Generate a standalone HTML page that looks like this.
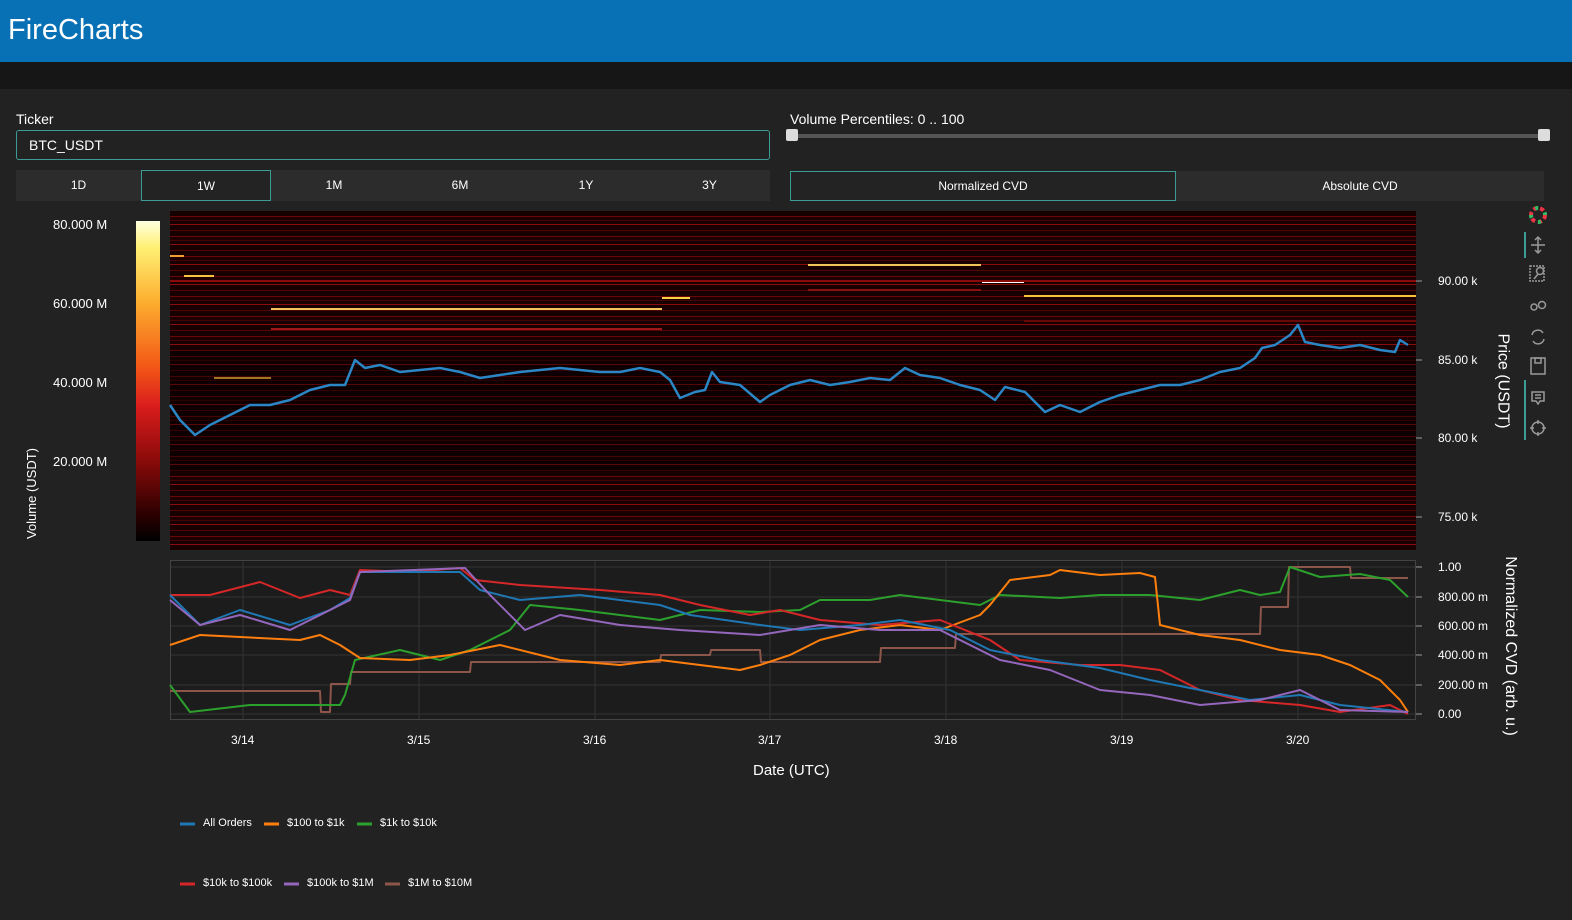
<!DOCTYPE html>
<html><head><meta charset="utf-8"><style>
*{margin:0;padding:0;box-sizing:border-box}
body{width:1572px;height:920px;background:#222;font-family:"Liberation Sans",sans-serif;color:#fff;position:relative;overflow:hidden}
.hdr{position:absolute;left:0;top:0;width:1572px;height:62px;background:#0870b4}
.hdr span{position:absolute;left:8px;top:14px;font-size:29px}
.bar{position:absolute;left:0;top:62px;width:1572px;height:27px;background:#161616}
.t{position:absolute;font-size:14px;white-space:nowrap}
.s{position:absolute;font-size:12px;white-space:nowrap}
.inp{position:absolute;left:16px;top:130px;width:754px;height:30px;border:1px solid #3a9c94;border-radius:3px;font-size:14px;padding:6px 12px}
.tabs{position:absolute;left:16px;top:170px;width:754px;height:31px;background:#2c2c2c}
.tab{position:absolute;top:0;height:31px;font-size:12px;text-align:center;line-height:31px}
.heat{position:absolute;left:170px;top:211px;width:1246px;height:339px;background:#140000;overflow:hidden}
</style></head><body>
<div class="hdr"><span>FireCharts</span></div>
<div class="bar"></div>
<div class="t" style="left:16px;top:111px">Ticker</div>
<div class="inp">BTC_USDT</div>
<div class="tabs">
<div class="tab" style="left:0;width:125px">1D</div>
<div class="tab" style="left:125px;width:130px;border:1px solid #3a9c94;background:#232323">1W</div>
<div class="tab" style="left:255px;width:126px">1M</div>
<div class="tab" style="left:381px;width:126px">6M</div>
<div class="tab" style="left:507px;width:126px">1Y</div>
<div class="tab" style="left:633px;width:121px">3Y</div>
</div>
<div class="t" style="left:790px;top:111px">Volume Percentiles: 0 .. 100</div>
<div style="position:absolute;left:792px;top:134px;width:752px;height:4px;background:#555;border-radius:2px"></div>
<div style="position:absolute;left:786px;top:129px;width:12px;height:12px;background:#ddd;border-radius:2px"></div>
<div style="position:absolute;left:1538px;top:129px;width:12px;height:12px;background:#ddd;border-radius:2px"></div>
<div style="position:absolute;left:790px;top:171px;width:754px;height:30px;background:#2c2c2c"></div>
<div class="tab" style="left:790px;top:171px;width:386px;height:30px;line-height:28px;border:1px solid #3a9c94;background:#232323">Normalized CVD</div>
<div class="tab" style="left:1176px;top:171px;width:368px;height:30px;line-height:30px">Absolute CVD</div>

<div style="position:absolute;left:136px;top:221px;width:24px;height:320px;background:linear-gradient(#ffffe0,#fff176 8%,#fdb030 25%,#f45a17 45%,#d91c1c 58%,#8a0a0a 75%,#2a0000 92%,#000)"></div>
<div class="s" style="left:53px;top:217px;font-size:13px">80.000 M</div>
<div class="s" style="left:53px;top:296px;font-size:13px">60.000 M</div>
<div class="s" style="left:53px;top:375px;font-size:13px">40.000 M</div>
<div class="s" style="left:53px;top:454px;font-size:13px">20.000 M</div>
<div class="s" style="left:-14px;top:486px;transform:rotate(-90deg);font-size:13px">Volume (USDT)</div>

<div class="heat" style="background:repeating-linear-gradient(#160000 0,#160000 5px,#6a0808 5px,#6a0808 6px,#1e0000 6px,#1e0000 9px,#420404 9px,#420404 10px,#160000 10px,#160000 13px,#8a0c0c 13px,#8a0c0c 14px,#180000 14px,#180000 19px,#520606 19px,#520606 20px)">
<svg width="1246" height="339" style="position:absolute;left:0;top:0">
<g stroke-width="2">
<line x1="0" y1="45" x2="14" y2="45" stroke="#f0a030"/>
<line x1="14" y1="65" x2="44" y2="65" stroke="#f7c441"/>
<line x1="44" y1="167" x2="101" y2="167" stroke="#f5b830"/>
<line x1="101" y1="98" x2="492" y2="98" stroke="#f2c35a"/>
<line x1="101" y1="118" x2="492" y2="118" stroke="#a01818"/>
<line x1="492" y1="87" x2="520" y2="87" stroke="#f7d240"/>
<line x1="638" y1="54" x2="811" y2="54" stroke="#f2c35a"/>
<line x1="638" y1="79" x2="811" y2="79" stroke="#8a1010"/>
<line x1="812" y1="71" x2="854" y2="71" stroke="#ffffff"/>
<line x1="854" y1="85" x2="1246" y2="85" stroke="#f5c23a"/>
<line x1="854" y1="110" x2="1246" y2="110" stroke="#6a0808"/>
<line x1="0" y1="70" x2="1246" y2="70" stroke="#8a0a0a"/>
</g>
<rect x="0" y="140" width="1246" height="120" fill="#000" opacity="0.35"/>
</svg>
</div>
<svg width="1572" height="920" style="position:absolute;left:0;top:0">
<g stroke="#999" stroke-width="1">
<line x1="1416" y1="281" x2="1422" y2="281"/><line x1="1416" y1="360" x2="1422" y2="360"/><line x1="1416" y1="438" x2="1422" y2="438"/><line x1="1416" y1="517" x2="1422" y2="517"/>
</g>
<polyline fill="none" stroke="#2b86c5" stroke-width="2.5" stroke-linejoin="round" points="170,405 180,420 195,435 210,425 230,415 250,405 270,405 290,400 310,390 330,385 345,385 355,360 365,368 380,365 400,372 420,370 440,368 460,372 480,378 500,375 520,372 540,370 560,368 580,370 600,372 620,372 640,368 660,372 670,380 680,398 695,392 705,390 712,372 720,382 740,385 760,402 770,395 790,385 810,380 830,385 850,382 870,378 890,380 905,368 920,375 940,378 960,385 980,390 995,400 1005,387 1025,392 1045,412 1060,405 1080,412 1100,402 1120,395 1140,390 1160,385 1180,385 1200,380 1220,372 1240,368 1255,358 1262,348 1275,345 1290,335 1298,325 1305,342 1320,345 1340,348 1360,345 1380,350 1395,352 1400,340 1408,345"/>
<rect x="170.5" y="560.5" width="1245" height="159" fill="#1c1c1c" stroke="#444"/>
<g stroke="#333" stroke-width="1">
<line x1="243" y1="561" x2="243" y2="719"/><line x1="419" y1="561" x2="419" y2="719"/><line x1="595" y1="561" x2="595" y2="719"/><line x1="770" y1="561" x2="770" y2="719"/><line x1="946" y1="561" x2="946" y2="719"/><line x1="1122" y1="561" x2="1122" y2="719"/><line x1="1298" y1="561" x2="1298" y2="719"/>
<line x1="171" y1="567" x2="1415" y2="567"/><line x1="171" y1="597" x2="1415" y2="597"/><line x1="171" y1="626" x2="1415" y2="626"/><line x1="171" y1="655" x2="1415" y2="655"/><line x1="171" y1="685" x2="1415" y2="685"/><line x1="171" y1="714" x2="1415" y2="714"/>
</g>
<g fill="none" stroke-width="2" stroke-linejoin="round">
<polyline stroke="#8c564b" points="170,691 320,691 321,712 330,712 331,684 350,684 351,672 470,672 471,662 660,662 661,655 710,655 711,650 760,650 761,662 880,662 881,648 955,648 956,634 1260,634 1261,607 1288,607 1289,567 1350,567 1351,578 1408,578"/>
<polyline stroke="#2ca02c" points="170,685 190,712 250,705 340,705 345,695 355,660 400,650 440,660 470,650 510,630 530,605 580,610 620,615 660,620 700,610 760,612 800,610 820,600 870,600 900,595 940,600 980,605 1000,595 1060,598 1100,595 1150,595 1200,600 1240,590 1260,595 1280,592 1290,567 1320,577 1360,574 1390,580 1408,597"/>
<polyline stroke="#ff7f0e" points="170,645 200,635 300,640 320,635 340,645 360,658 410,660 450,655 500,645 560,660 620,665 660,660 700,665 740,670 760,665 790,655 820,640 860,630 900,625 940,630 980,615 990,605 1010,580 1050,575 1060,570 1100,575 1140,573 1155,577 1160,625 1200,635 1240,640 1280,650 1320,655 1350,665 1380,680 1400,700 1408,712"/>
<polyline stroke="#d62728" points="170,595 210,595 260,582 300,598 330,590 350,595 360,570 410,572 460,568 475,580 520,585 600,590 660,595 700,605 750,615 780,610 820,620 880,625 940,620 990,640 1020,660 1080,665 1120,665 1160,670 1200,690 1240,700 1300,705 1340,712 1390,705 1408,714"/>
<polyline stroke="#1f77b4" points="170,595 200,625 240,610 290,625 330,610 350,598 360,572 460,572 480,590 520,600 580,595 660,605 690,615 760,625 800,630 860,625 900,620 950,630 990,650 1040,660 1100,668 1150,680 1200,690 1250,700 1300,695 1340,705 1408,712"/>
<polyline stroke="#9467bd" points="170,600 200,625 240,615 290,630 330,610 350,600 360,572 465,568 490,595 525,630 560,615 620,625 680,630 760,635 820,625 880,630 940,630 1000,660 1050,670 1100,690 1150,695 1200,705 1260,700 1300,690 1340,710 1408,712"/>
</g>
<g stroke="#999"><line x1="1416" y1="567" x2="1422" y2="567"/><line x1="1416" y1="597" x2="1422" y2="597"/><line x1="1416" y1="626" x2="1422" y2="626"/><line x1="1416" y1="655" x2="1422" y2="655"/><line x1="1416" y1="685" x2="1422" y2="685"/><line x1="1416" y1="714" x2="1422" y2="714"/></g>
<g fill="none" stroke="#999" stroke-width="1.5">
<line x1="1525" y1="232" x2="1525" y2="258" stroke="#3a9c94" stroke-width="2"/>
<line x1="1525" y1="380" x2="1525" y2="440" stroke="#3a9c94" stroke-width="2"/>
<path d="M1538 238v14M1531 245h14M1535 240l3-3 3 3M1535 250l3 3 3-3"/>
<rect x="1530" y="266" width="14" height="15" stroke-dasharray="2 1"/><circle cx="1540" cy="271" r="3.5"/><line x1="1538" y1="274" x2="1534" y2="279"/>
<circle cx="1534" cy="307" r="3"/><circle cx="1542" cy="305" r="3.5"/>
<path d="M1532 335a6 6 0 0 1 11-2M1544 339a6 6 0 0 1-11 2"/>
<rect x="1531" y="358" width="14" height="16"/><rect x="1535" y="358" width="6" height="5"/>
<path d="M1532 392h12v9h-4l-2 3-2-3h-4zM1535 395h6M1535 398h6"/>
<circle cx="1538" cy="428" r="6"/><path d="M1538 420v4M1538 432v4M1530 428h4M1542 428h4"/>
</g>
<g><circle cx="1538" cy="215" r="7" fill="none" stroke="#e34" stroke-width="4" stroke-dasharray="4 3"/><circle cx="1538" cy="215" r="7" fill="none" stroke="#3b6" stroke-width="4" stroke-dasharray="3 8" stroke-dashoffset="3"/></g>
<g stroke-width="3">
<line x1="180" y1="824" x2="195" y2="824" stroke="#1f77b4"/><line x1="264" y1="824" x2="279" y2="824" stroke="#ff7f0e"/><line x1="357" y1="824" x2="372" y2="824" stroke="#2ca02c"/>
<line x1="180" y1="884" x2="195" y2="884" stroke="#d62728"/><line x1="284" y1="884" x2="299" y2="884" stroke="#9467bd"/><line x1="385" y1="884" x2="400" y2="884" stroke="#8c564b"/>
</g>
</svg>
<div class="s" style="left:1438px;top:274px">90.00 k</div>
<div class="s" style="left:1438px;top:353px">85.00 k</div>
<div class="s" style="left:1438px;top:431px">80.00 k</div>
<div class="s" style="left:1438px;top:510px">75.00 k</div>
<div class="t" style="left:1455px;top:372px;transform:rotate(90deg);font-size:16px">Price (USDT)</div>
<div class="s" style="left:1438px;top:560px">1.00</div>
<div class="s" style="left:1438px;top:590px">800.00 m</div>
<div class="s" style="left:1438px;top:619px">600.00 m</div>
<div class="s" style="left:1438px;top:648px">400.00 m</div>
<div class="s" style="left:1438px;top:678px">200.00 m</div>
<div class="s" style="left:1438px;top:707px">0.00</div>
<div class="t" style="left:1420px;top:637px;transform:rotate(90deg);font-size:16px">Normalized CVD (arb. u.)</div>
<div class="s" style="left:231px;top:733px">3/14</div><div class="s" style="left:407px;top:733px">3/15</div><div class="s" style="left:583px;top:733px">3/16</div><div class="s" style="left:758px;top:733px">3/17</div><div class="s" style="left:934px;top:733px">3/18</div><div class="s" style="left:1110px;top:733px">3/19</div><div class="s" style="left:1286px;top:733px">3/20</div>
<div class="t" style="left:753px;top:762px;font-size:15px">Date (UTC)</div>
<div class="s" style="left:203px;top:817px;font-size:11px">All Orders</div>
<div class="s" style="left:287px;top:817px;font-size:11px">$100 to $1k</div>
<div class="s" style="left:380px;top:817px;font-size:11px">$1k to $10k</div>
<div class="s" style="left:203px;top:877px;font-size:11px">$10k to $100k</div>
<div class="s" style="left:307px;top:877px;font-size:11px">$100k to $1M</div>
<div class="s" style="left:408px;top:877px;font-size:11px">$1M to $10M</div>
</body></html>
